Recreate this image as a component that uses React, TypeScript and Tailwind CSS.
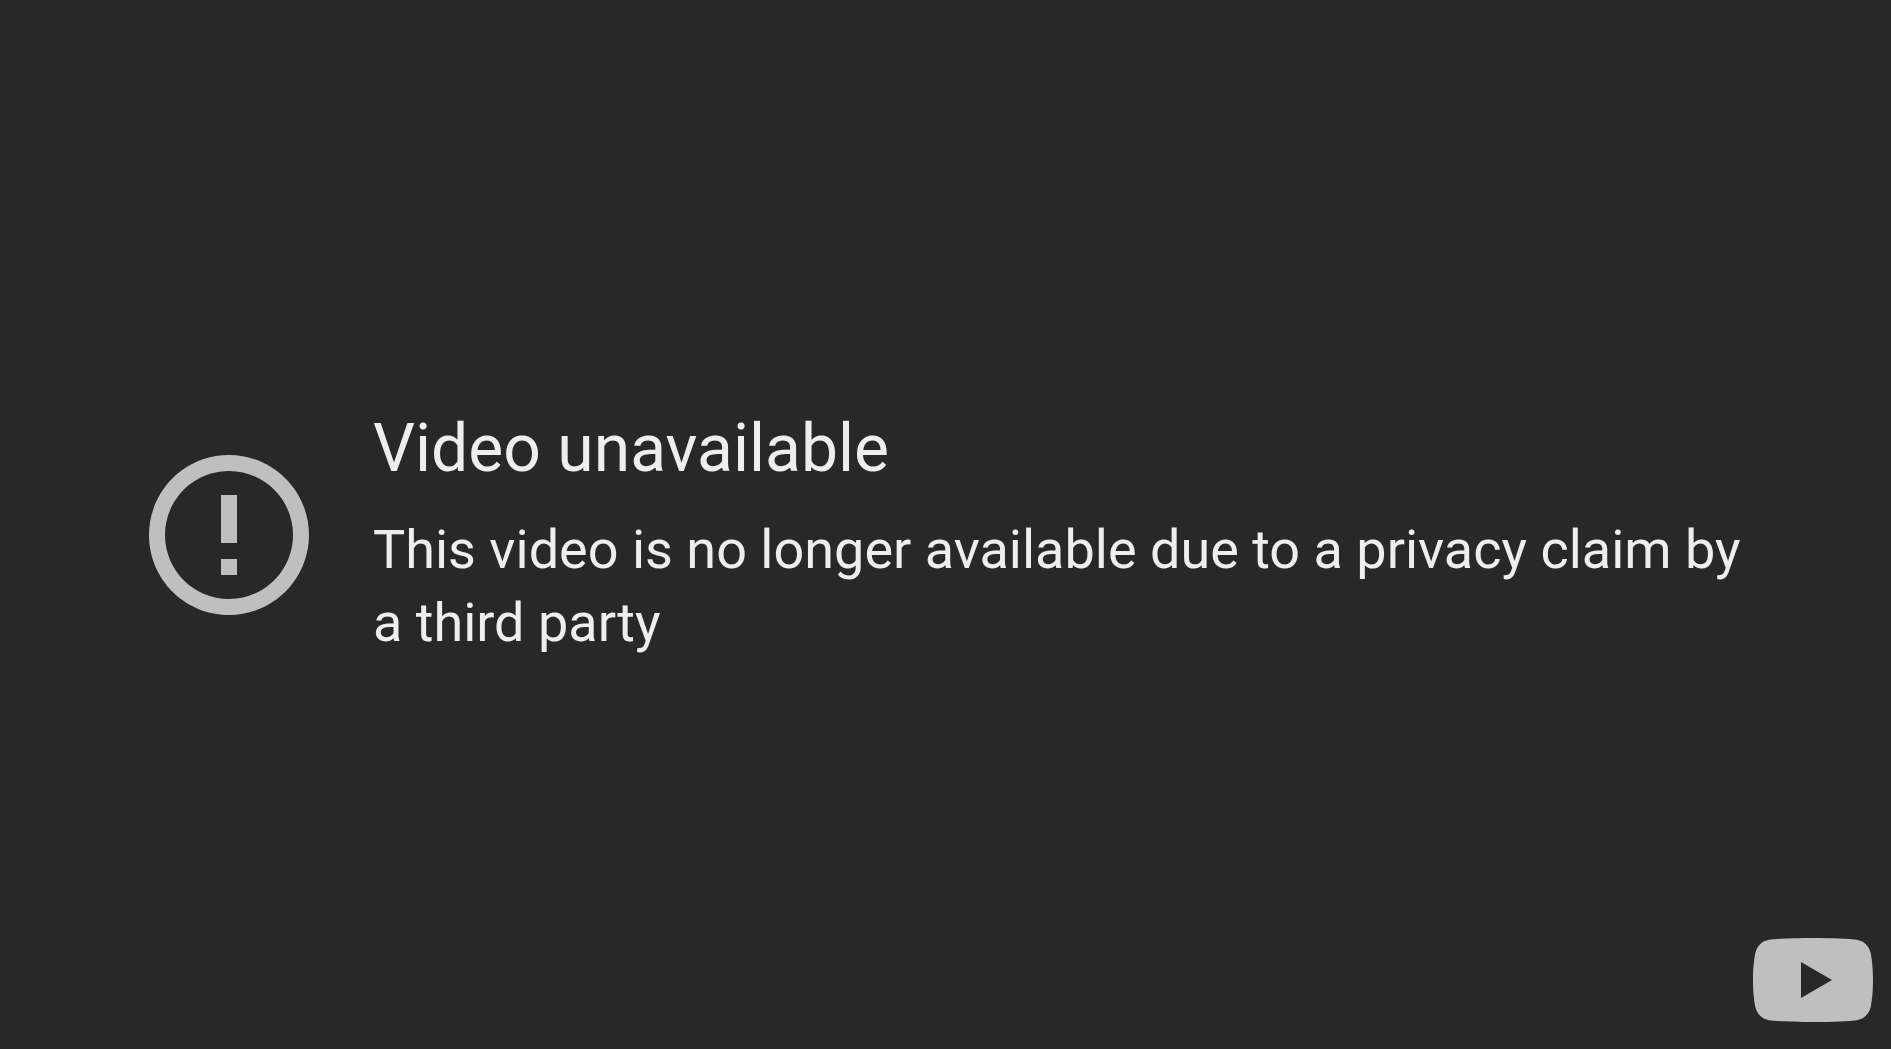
function AlertIcon() {
  return (
    <svg viewBox="0 0 24 24" className="size-48 shrink-0 fill-[#bfbfbf]" aria-hidden="true">
      <path d="M11 15h2v2h-2zm0-8h2v6h-2zm.99-5C6.47 2 2 6.48 2 12s4.47 10 9.99 10C17.52 22 22 17.52 22 12S17.52 2 11.99 2zM12 20c-4.42 0-8-3.58-8-8s3.58-8 8-8 8 3.58 8 8-3.58 8-8 8z" />
    </svg>
  );
}

function YouTubeLogo() {
  return (
    <svg viewBox="0 0 120 84" className="w-[120px] fill-[#bfbfbf]" aria-hidden="true">
      <path
        fillRule="evenodd"
        d="M60 0C40 0 23 .8 16 1.8C9 3 4 8 2.3 15C.8 23 0 31 0 42S.8 61 2.3 69C4 76 9 81 16 82.2C23 83.2 40 84 60 84S97 83.2 104 82.2C111 81 116 76 117.7 69C119.2 61 120 53 120 42S119.2 23 117.7 15C116 8 111 3 104 1.8C97 .8 80 0 60 0ZM48 24L79 42L48 60Z"
      />
    </svg>
  );
}

export default function App() {
  return (
    <main className="relative flex min-h-screen items-center bg-[#282828] pt-5 pr-32 pl-[133px] font-['Roboto',sans-serif] text-[#eeeeee]">
      <div className="flex flex-1 items-center gap-12">
        <AlertIcon />
        <div className="min-w-0 flex-1 pb-1.5">
          <h1 className="text-[66px] leading-[88px]">Video unavailable</h1>
          <p className="mt-5 text-[54px] leading-[73px]">
            This video is no longer available due to a privacy claim by a third party
          </p>
        </div>
      </div>
      <a href="https://www.youtube.com" aria-label="YouTube" className="absolute right-[18px] bottom-[27px]">
        <YouTubeLogo />
      </a>
    </main>
  );
}
